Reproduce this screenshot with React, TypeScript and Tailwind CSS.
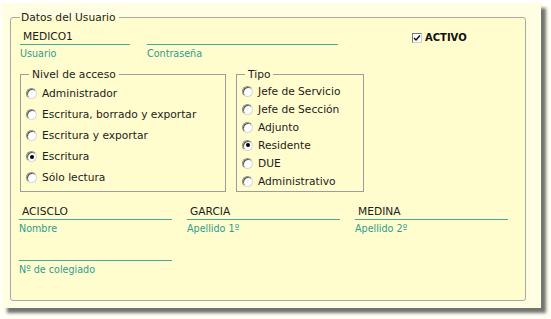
import React from 'react';

const SANS = "font-['DejaVu_Sans',Verdana,sans-serif]";
const COND = "font-['DejaVu_Sans_Condensed','DejaVu_Sans',sans-serif] font-stretch-condensed";

const Field: React.FC<{ value?: string; label: string; width: string }> = ({ value, label, width }) => (
  <div className={width}>
    <div className={`h-[16px] border-b border-[#4ba79c] pl-[3px] text-[10.67px] leading-[15px] text-[#1c1c1c] ${SANS}`}>
      {value}
    </div>
    <div className={`pt-[2px] text-[10.67px] leading-[13px] text-[#2f9c8f] ${COND}`}>{label}</div>
  </div>
);

const Radio: React.FC<{ label: string; checked?: boolean; rowH: string }> = ({ label, checked, rowH }) => (
  <div className={`flex items-center ${rowH}`}>
    <span className="flex h-[11px] w-[11px] items-center justify-center rounded-full border border-[#8e8e8e] border-r-[#d8d8d8] border-b-[#d8d8d8] bg-white shadow-[inset_1px_1px_0_#5a5a5a]">
      {checked && <span className="h-[4px] w-[4px] rounded-full bg-black" />}
    </span>
    <span className="ml-[5px] text-[10.67px] leading-[13px] text-[#1c1c1c]">{label}</span>
  </div>
);

const nivel = [
  'Administrador',
  'Escritura, borrado y exportar',
  'Escritura y exportar',
  'Escritura',
  'Sólo lectura',
];

const tipo = ['Jefe de Servicio', 'Jefe de Sección', 'Adjunto', 'Residente', 'DUE', 'Administrativo'];

export default function App() {
  return (
    <div className={`h-[319px] w-[551px] bg-[#fffff6] ${SANS}`}>
      <div className="ml-[2px] mt-[3px] h-[305px] w-[539px] bg-[#fffee2] pl-[8px] pt-[8px] shadow-[5px_5px_3px_rgba(0,0,0,0.55)]">
        <fieldset className="h-[290px] w-[516px] rounded-[3px] border border-[#a9a9a3] bg-[#fffdce] pl-[9px]">
          <legend className="pl-[1px] pr-[3px] text-[10.67px] leading-[13px] text-[#1c1c1c]">Datos del Usuario</legend>

          <div className="mt-[5px] flex items-start">
            <Field value="MEDICO1" label="Usuario" width="w-[110px]" />
            <div className="ml-[17px]">
              <Field label="Contraseña" width="w-[191px]" />
            </div>
            <div className="ml-[74px] mt-[2px] flex items-center">
              <span className="flex h-[10px] w-[10px] items-center justify-center border border-[#7a7a7a] border-r-[#d0d0d0] border-b-[#d0d0d0] bg-white">
                <svg width="8" height="8" viewBox="0 0 8 8">
                  <path d="M1 4 L3 6 L7 1.5" fill="none" stroke="#111" strokeWidth="1.5" />
                </svg>
              </span>
              <span className="ml-[3px] text-[10px] font-bold leading-[13px] text-[#111]">ACTIVO</span>
            </div>
          </div>

          <div className="mt-[8px] flex items-start">
            <fieldset className="w-[206px] border border-[#9d9d9d] pl-[5px]">
              <legend className="ml-[3px] px-[3px] text-[10.67px] leading-[13px] text-[#1c1c1c]">Nivel de acceso</legend>
              <div className="h-[110px] pt-[2px]">
                {nivel.map((n, i) => (
                  <Radio key={n} label={n} checked={i === 3} rowH="h-[21px]" />
                ))}
              </div>
            </fieldset>
            <fieldset className="ml-[10px] w-[128px] border border-[#9d9d9d] pl-[5px]">
              <legend className="ml-[3px] px-[3px] text-[10.67px] leading-[13px] text-[#1c1c1c]">Tipo</legend>
              <div className="h-[110px] pt-[1px]">
                {tipo.map((t, i) => (
                  <Radio key={t} label={t} checked={i === 3} rowH="h-[18px]" />
                ))}
              </div>
            </fieldset>
          </div>

          <div className="-ml-px mt-[12px] flex gap-[15px]">
            <Field value="ACISCLO" label="Nombre" width="w-[153px]" />
            <Field value="GARCIA" label="Apellido 1º" width="w-[153px]" />
            <Field value="MEDINA" label="Apellido 2º" width="w-[153px]" />
          </div>

          <div className="-ml-px mt-[10px]">
            <Field label="Nº de colegiado" width="w-[153px]" />
          </div>
        </fieldset>
      </div>
    </div>
  );
}
